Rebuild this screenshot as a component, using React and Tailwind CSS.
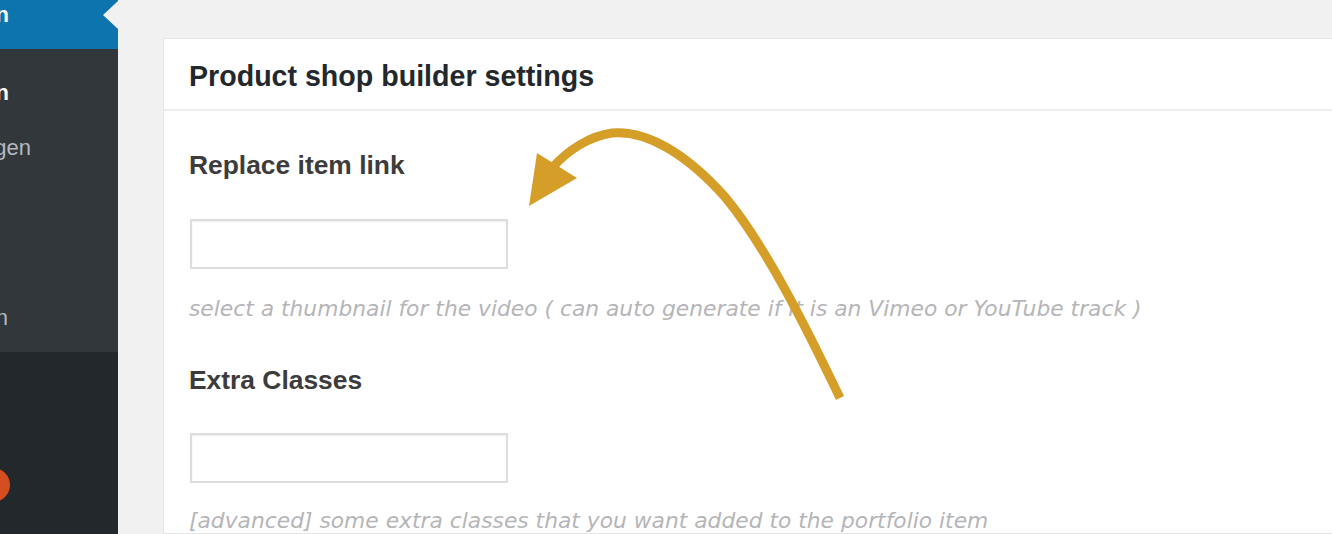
export default function App() {
  return (
    <div className="flex h-[534px] w-[1332px] overflow-hidden bg-[#f1f1f1]" style={{ fontFamily: '"Liberation Sans", Arial, sans-serif' }}>
      <aside className="flex w-[118px] shrink-0 flex-col overflow-hidden">
        <div className="relative h-[49px] bg-[#0d74ad] pt-[2px]">
          <div className="flex w-[9px] justify-end whitespace-nowrap text-[22px] font-bold leading-[26px] text-white">Projecten</div>
          <div className="absolute right-0 top-[1px] h-0 w-0 border-y-[14px] border-r-[15px] border-y-transparent border-r-[#f1f1f1]"></div>
        </div>
        <div className="h-[303px] bg-[#32373c] text-[22px]">
          <div className="mt-[30px] flex w-[9px] justify-end whitespace-nowrap font-bold leading-[28px] text-white">Alle projecten</div>
          <div className="mt-[27px] flex w-[31px] justify-end whitespace-nowrap leading-[28px] text-[#b4b9be]">Instellingen</div>
          <div className="mt-[142px] flex w-[8px] justify-end whitespace-nowrap leading-[28px] text-[#b4b9be]">Toevoegen</div>
        </div>
        <div className="relative flex-1 bg-[#23282d]">
          <div className="absolute left-[-24px] top-[116px] h-[34px] w-[34px] rounded-full bg-[#d54e21]"></div>
        </div>
      </aside>
      <main className="relative flex-1 pl-[45px] pt-[38px]">
        <div className="h-full border border-r-0 border-[#e5e5e5] bg-white">
          <div className="flex h-[72px] items-center border-b-2 border-[#eeeeee] px-[25px] pt-[3px]">
            <h2 className="text-[28.6px] font-bold leading-[36px] text-[#23282d]">Product shop builder settings</h2>
          </div>
          <div className="px-[25px]">
            <h3 className="mt-[39px] text-[26.4px] font-bold leading-[30px] text-[#3c3c3c]">Replace item link</h3>
            <input className="ml-[1px] mt-[39px] block h-[50px] w-[318px] border-2 border-[#dddddd] bg-white shadow-[inset_0_1px_2px_rgba(0,0,0,0.07)] outline-none" />
            <p className="mt-[25px] whitespace-nowrap text-[21.8px] italic leading-[30px] text-[#b5b5b8]" style={{ fontFamily: '"DejaVu Sans", sans-serif' }}>select a thumbnail for the video ( can auto generate if it is an Vimeo or YouTube track )</p>
            <h3 className="mt-[41px] text-[26.4px] font-bold leading-[30px] text-[#3c3c3c]">Extra Classes</h3>
            <input className="ml-[1px] mt-[38px] block h-[50px] w-[318px] border-2 border-[#dddddd] bg-white shadow-[inset_0_1px_2px_rgba(0,0,0,0.07)] outline-none" />
            <p className="mt-[23px] whitespace-nowrap text-[21.8px] italic leading-[30px] text-[#b5b5b8]" style={{ fontFamily: '"DejaVu Sans", sans-serif' }}>[advanced] some extra classes that you want added to the portfolio item</p>
          </div>
        </div>
        <svg className="pointer-events-none absolute left-[-118px] top-0" width="1332" height="534" viewBox="0 0 1332 534">
          <path d="M840 398 C 805 325, 765 245, 725 197 C 685 152, 645 130, 612 133 C 590 136, 568 150, 553 167" fill="none" stroke="#d49e28" strokeWidth="9" />
          <polygon points="529,206 537,153 577,178" fill="#d49e28" />
        </svg>
      </main>
    </div>
  );
}
